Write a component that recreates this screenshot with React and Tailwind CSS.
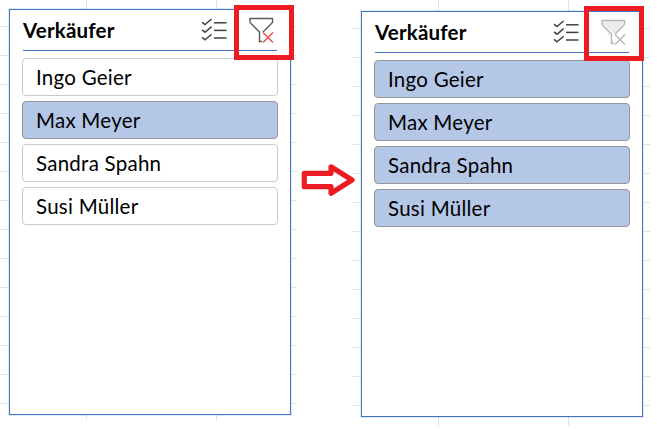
import React from "react";

const NAMES = ["Ingo Geier", "Max Meyer", "Sandra Spahn", "Susi Müller"];

function MultiSelectIcon() {
  const checks = [0, 7.6, 15.2];
  return (
    <svg width="26" height="24" viewBox="0 0 26 24" fill="none" stroke="#404040" strokeWidth="1.5">
      {checks.map((d) => (
        <g key={d} transform={`translate(0 ${d})`}>
          <path d="M1 4.2 L4 6.6 L10.6 1" />
          <path d="M13 4.8 H25.5" />
        </g>
      ))}
    </svg>
  );
}

function ClearFilterIcon({ active }) {
  const stroke = active ? "#5a5a5a" : "#b8b8b8";
  const cross = active ? "#ea4f52" : "#b8b8b8";
  return (
    <svg width="26" height="26" viewBox="0 0 26 26" fill={active ? "none" : "#ececec"} stroke={stroke} strokeWidth="1.4">
      <path d="M2 5.5 V1.5 H24.5 V5.5 L15 15 M2 5.5 L11.5 15 V24.5 H14" />
      <path d="M15 15.5 L25 25.5 M25 15.5 L15 25.5" stroke={cross} strokeWidth="1.5" fill="none" />
    </svg>
  );
}

function Slicer({ selected, active, redLeft, redTop }) {
  return (
    <div className="relative w-[282px] h-[406px] bg-white border border-[#4472c4] shadow-[0_0_0_1px_rgba(68,114,196,0.15)] px-[12px]">
      <div className="flex items-center h-[41px] mx-[1px] border-b border-[#4472c4]">
        <span className="pt-[1px] font-['Lato',sans-serif] font-bold text-[20.5px] tracking-[0.2px] text-black">Verkäufer</span>
        <div className="ml-auto flex items-center gap-[21px] pr-[3px]">
          <MultiSelectIcon />
          <ClearFilterIcon active={active} />
        </div>
      </div>
      <div className="flex flex-col gap-[5px] mt-[7px]">
        {NAMES.map((name) => {
          const on = selected.includes(name);
          return (
            <div
              key={name}
              className={
                on
                  ? "h-[38px] flex items-center pl-[13px] pt-[1px] rounded-[4px] border border-[#979797] bg-[#b4c7e7] font-['Lato',sans-serif] text-[20.5px] tracking-[0.25px] text-black"
                  : "h-[38px] flex items-center pl-[13px] pt-[1px] rounded-[4px] border border-[#cacaca] bg-white font-['Lato',sans-serif] text-[20.5px] tracking-[0.25px] text-black"
              }
            >
              {name}
            </div>
          );
        })}
      </div>
      <div
        className="absolute w-[60px] h-[55px] border-[5px] border-[#ed1c24]"
        style={{ left: redLeft, top: redTop }}
      />
    </div>
  );
}

export default function App() {
  return (
    <div className="flex items-start w-[657px] h-[429px] bg-white overflow-hidden">
      <div className="w-[297px] h-[420px] pl-[9px] pt-[9px] bg-[linear-gradient(to_right,#e2e2e2_1px,transparent_1px),linear-gradient(#e2e2e2_1px,transparent_1px)] bg-[size:130px_100%,100%_29px] bg-[position:86px_0,0_26px]">
        <Slicer selected={["Max Meyer"]} active redLeft={224} redTop={-5} />
      </div>
      <div className="w-[56px] pt-[162px]">
        <svg width="56" height="36" viewBox="0 0 56 36" fill="white" stroke="#ed1c24" strokeWidth="5.2" strokeLinejoin="round" className="relative z-10 overflow-visible">
          <path d="M7.3 11.3 H34 V4.8 L55 18 L34 31.2 V24.7 H7.3 Z" />
        </svg>
      </div>
      <div className="w-[297px] h-[426px] pl-[8px] pt-[11px] bg-[linear-gradient(to_right,#e2e2e2_1px,transparent_1px),linear-gradient(#e2e2e2_1px,transparent_1px)] bg-[size:130px_100%,100%_29px] bg-[position:85px_0,0_28px]">
        <Slicer selected={NAMES} active={false} redLeft={222} redTop={-6} />
      </div>
    </div>
  );
}
